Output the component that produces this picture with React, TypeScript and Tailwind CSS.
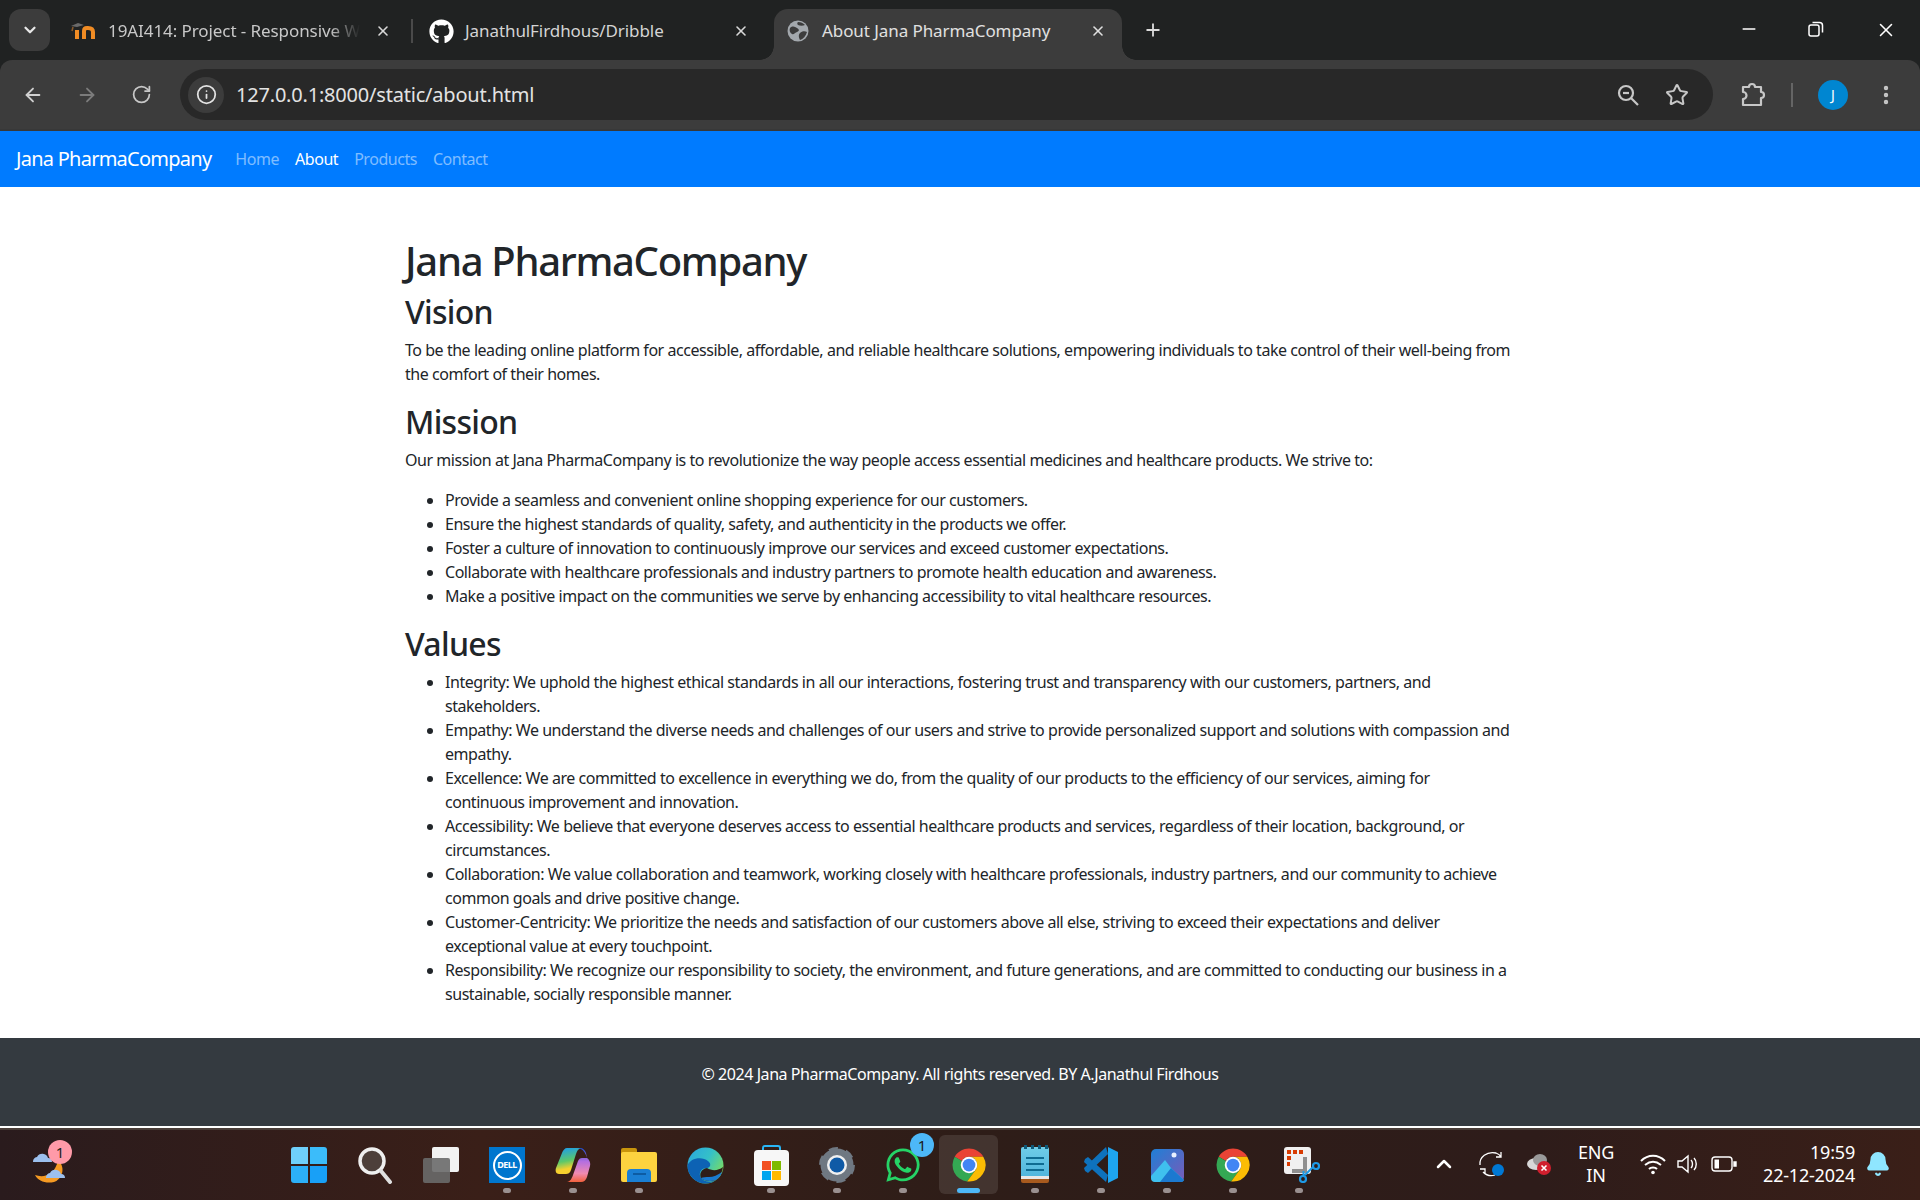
import { ArrowLeft, ArrowRight, ChevronDown, ChevronUp, Info, MoreVertical, Plus, RotateCw, Star, X, Minus, Bell } from "lucide-react";
import { FaGithub, FaWhatsapp } from "react-icons/fa";

const segoe = "font-['Noto_Sans',sans-serif]";

function Globe() {
  return (
    <svg width="22" height="22" viewBox="0 0 22 22">
      <circle cx="11" cy="11" r="10.5" fill="#a3a8ad" />
      <path d="M3 8c3-3 5-1 7 0s3 3 0 4-3 3-5 2-3-4-2-6zM13 13c2-2 5-2 7-1-1 4-4 7-7 8-1-2-2-5 0-7zM11 2c3 0 5 1 7 3-2 1-5 1-7 0-1-1-1-2 0-3z" fill="#3c3c3c" />
    </svg>
  );
}

function MoodleIcon() {
  return (
    <svg width="26" height="16" viewBox="0 0 26 16" fill="none">
      <path d="M0 3l7-3 6 2-7 2z" fill="#6a6a6a" />
      <path d="M2 4l-1 4" stroke="#8a5a2a" strokeWidth="1.500" />
      <path d="M6 16V7" stroke="#f08c24" strokeWidth="4" />
      <path d="M13 16V8c0-2 1-3 3-3h1c3 0 5 1 5 4v7" stroke="#f08c24" strokeWidth="4" />
    </svg>
  );
}

function ChromeLogo({ size = 36 }: { size?: number }) {
  return (
    <svg width={size} height={size} viewBox="0 0 48 48">
      <path d="M5 13A22 22 0 0 1 43.050 13H24A11 11 0 0 0 14.500 18.500z" fill="#ea4335" />
      <path d="M5 13A22 22 0 0 0 21.500 45.900L33.500 29.500A11 11 0 0 1 14.500 18.500z" fill="#34a853" />
      <path d="M43.050 13A22 22 0 0 1 21.500 45.900L33.500 29.500A11 11 0 0 0 24 13z" fill="#fbbc04" />
      <circle cx="24" cy="24" r="11" fill="#fff" />
      <circle cx="24" cy="24" r="8.500" fill="#4285f4" />
    </svg>
  );
}

function Tab({ children, close, width }: { children: React.ReactNode; close: number; width: string }) {
  return (
    <div className={`flex items-center relative h-full ${width}`}>
      {children}
      <X size={16} strokeWidth={2.4} className="absolute text-[#d8d8d8]" style={{ left: close }} />
    </div>
  );
}

function ChromeBar() {
  return (
    <div className="bg-[#202222]">
      <div className="flex h-[60px] pl-[9px] text-[#d4d4d4] text-[17px] tracking-[-0.08px]">
        <div className="w-[41px] h-[42px] mt-[9px] rounded-[12px] bg-[#3c3c3c] flex items-center justify-center">
          <ChevronDown size={18} strokeWidth={3} className="text-[#e8e8e8]" />
        </div>
        <Tab width="w-[363px] pl-[21px] pt-[2px]" close={325}>
          <MoodleIcon />
          <span className="ml-[11px] inline-block whitespace-nowrap text-[#c8c8c8] [mask-image:linear-gradient(90deg,#000_88%,transparent)]">19AI414: Project - Responsive W</span>
          <span className="absolute right-0 top-[19px] h-[24px] w-[2px] bg-[#4a4a4a]" />
        </Tab>
        <Tab width="w-[361px] pl-[16px] pt-[2px]" close={320}>
          <FaGithub size={25} className="text-white" />
          <span className="ml-[11px] whitespace-nowrap">JanathulFirdhous/Dribble</span>
        </Tab>
        <div className="relative w-[348px] mt-[9px] h-[51px] bg-[#3c3c3c] rounded-t-[14px] flex items-center pl-[13px] pb-[7px]">
          <span className="absolute left-[-14px] bottom-0 w-[14px] h-[14px] bg-[radial-gradient(circle_at_0_0,#202222_13.5px,#3c3c3c_14px)]" />
          <span className="absolute right-[-14px] bottom-0 w-[14px] h-[14px] bg-[radial-gradient(circle_at_100%_0,#202222_13.5px,#3c3c3c_14px)]" />
          <Globe />
          <span className="ml-[13px] whitespace-nowrap text-[#e0e0e0]">About Jana PharmaCompany</span>
          <X size={16} strokeWidth={2.4} className="absolute left-[316px] top-[14px] text-[#e0e0e0]" />
        </div>
        <div className="ml-[21px] flex items-center h-[60px]">
          <Plus size={20} strokeWidth={2.2} className="text-[#dcdcdc]" />
        </div>
        <div className="ml-auto flex items-start pt-[19px] text-white">
          <Minus size={20} strokeWidth={1.8} className="mr-[49px]" />
          <svg width="16" height="16" viewBox="0 0 16 16" fill="none" stroke="#fff" strokeWidth="1.5" className="mt-[2px] mr-[51px]">
            <rect x="1" y="4" width="10" height="11" rx="2" />
            <path d="M4.500 1.500h7a3 3 0 0 1 3 3v7" />
          </svg>
          <X size={22} strokeWidth={1.7} className="mr-[23px]" />
        </div>
      </div>
      <div className="h-[71px] bg-[#3c3c3c] rounded-t-[12px] border-b-2 border-[#383838] flex items-center text-[#c7c7c7]">
        <div className="flex items-center pl-[22px] w-[180px]">
          <ArrowLeft size={22} strokeWidth={2} className="text-[#d0d0d0]" />
          <ArrowRight size={22} strokeWidth={2} className="ml-[32px] text-[#7c7c7c]" />
          <RotateCw size={21} strokeWidth={2} className="ml-[33px]" />
        </div>
        <div className="w-[1533px] h-[51px] rounded-full bg-[#282828] flex items-center pl-[8px] pr-[24px]">
          <div className="w-[36px] h-[36px] rounded-full bg-[#3c3c3c] flex items-center justify-center">
            <Info size={21} strokeWidth={2} className="text-[#e3e3e3]" />
          </div>
          <span className="ml-[12px] text-[20px] tracking-[-0.2px] text-[#e3e3e3]">127.0.0.1:8000/static/about.html</span>
          <svg width="22" height="22" viewBox="0 0 22 22" fill="none" stroke="#c7c7c7" strokeWidth="2.200" className="ml-auto">
            <circle cx="9" cy="9" r="7" />
            <path d="M14 14l7 7" />
            <path d="M6 9h6" />
          </svg>
          <Star size={24} strokeWidth={2} className="ml-[26px]" />
        </div>
        <svg width="26" height="26" viewBox="0 0 26 26" fill="none" stroke="#c7c7c7" strokeWidth="2.2" className="ml-[27px]">
          <path d="M3 5h6a3 3 0 0 1 6 0h6v5a3 3 0 0 1 0 6v7H3v-6a3 3 0 0 0 0-7z" strokeLinejoin="round" />
        </svg>
        <span className="ml-[25px] w-[2px] h-[24px] bg-[#656565]" />
        <div className="ml-[25px] w-[30px] h-[30px] rounded-full bg-[#0086d1] flex items-center justify-center text-[14px] text-white">J</div>
        <MoreVertical size={24} strokeWidth={2.4} className="ml-[26px]" />
      </div>
    </div>
  );
}

function NavBar() {
  return (
    <nav className="bg-[#007bff] h-[56px] flex items-center px-4 tracking-[-0.46px]">
      <span className="text-[20px] text-white mr-4 tracking-[-0.75px]">Jana PharmaCompany</span>
      <a className="px-2 text-white/50">Home</a>
      <a className="px-2 text-white">About</a>
      <a className="px-2 text-white/50">Products</a>
      <a className="px-2 text-white/50">Contact</a>
    </nav>
  );
}

const missionItems = [
  "Provide a seamless and convenient online shopping experience for our customers.",
  "Ensure the highest standards of quality, safety, and authenticity in the products we offer.",
  "Foster a culture of innovation to continuously improve our services and exceed customer expectations.",
  "Collaborate with healthcare professionals and industry partners to promote health education and awareness.",
  "Make a positive impact on the communities we serve by enhancing accessibility to vital healthcare resources.",
];

const valueItems = [
  "Integrity: We uphold the highest ethical standards in all our interactions, fostering trust and transparency with our customers, partners, and stakeholders.",
  "Empathy: We understand the diverse needs and challenges of our users and strive to provide personalized support and solutions with compassion and empathy.",
  "Excellence: We are committed to excellence in everything we do, from the quality of our products to the efficiency of our services, aiming for continuous\u00A0improvement and innovation.",
  "Accessibility: We believe that everyone deserves access to essential healthcare products and services, regardless of their location, background, or circumstances.",
  "Collaboration: We value collaboration and teamwork, working closely with healthcare professionals, industry partners, and our community to achieve common goals and drive positive change.",
  "Customer-Centricity: We prioritize the needs and satisfaction of our customers above all else, striving to exceed their expectations and deliver exceptional value at every touchpoint.",
  "Responsibility: We recognize our responsibility to society, the environment, and future generations, and are committed to conducting our business in a sustainable, socially responsible manner.",
];

function Content() {
  return (
    <main className="flex-1 w-[1140px] mx-auto px-[15px] pt-[50px] text-[#212529] tracking-[-0.46px]">
      <h1 className="text-[40px] leading-[48px] font-medium mb-2 tracking-[-1.3px]">Jana PharmaCompany</h1>
      <h2 className="text-[32px] leading-[38px] font-medium mb-[7px] tracking-[-0.7px]">Vision</h2>
      <p className="mb-[17px] leading-6">
        To be the leading online platform for accessible, affordable, and reliable healthcare solutions, empowering individuals to take control of their well-being from the comfort of their homes.
      </p>
      <h2 className="text-[32px] leading-[38px] font-medium mb-[7px] tracking-[-0.7px]">Mission</h2>
      <p className="mb-4 leading-6">
        Our mission at Jana PharmaCompany is to revolutionize the way people access essential medicines and healthcare products. We strive to:
      </p>
      <ul className="list-disc pl-10 mb-[17px] leading-6">
        {missionItems.map((t) => <li key={t}>{t}</li>)}
      </ul>
      <h2 className="text-[32px] leading-[38px] font-medium mb-[7px] tracking-[-0.7px]">Values</h2>
      <ul className="list-disc pl-10 mb-4 leading-6">
        {valueItems.map((t) => <li key={t}>{t}</li>)}
      </ul>
    </main>
  );
}

function Footer() {
  return (
    <footer className="bg-[#343a40] h-[88px] pt-6 text-center text-white leading-6 tracking-[-0.44px]">
      © 2024 Jana PharmaCompany. All rights reserved. BY A.Janathul Firdhous
    </footer>
  );
}

function Cell({ children, dot = true }: { children: React.ReactNode; dot?: boolean }) {
  return (
    <div className="relative w-[66px] h-[72px] flex items-center justify-center">
      {children}
      {dot && <span className="absolute bottom-[8px] w-[8px] h-[5px] rounded-full bg-[#9a9090]" />}
    </div>
  );
}

function Taskbar() {
  return (
    <div className="h-[72px] border-t-2 border-t-[#4a3d38] bg-[linear-gradient(90deg,#2a1b1d,#3a1f18_25%,#2e1d18_50%,#2e1c1a_80%,#3a1f18)] relative flex items-center text-white">
      {/* weather */}
      <div className="absolute left-[28px] top-[10px] w-[44px] h-[46px]">
        <svg width="44" height="46" viewBox="0 0 44 46">
          <path d="M30 20a13 13 0 0 1-4 22c-8 2-16-1-19-7 8 3 20 1 23-15z" fill="#f59a23" />
          <path d="M5 22a5 5 0 0 1 4-5 6 6 0 0 1 11 1c3 0 4 2 4 4z" fill="#9cc0ee" />
          <path d="M18 38a5 5 0 0 1 4-5 6 6 0 0 1 11 1c3 0 4 2 4 4z" fill="#9cc0ee" />
        </svg>
        <span className="absolute right-0 top-0 w-[24px] h-[24px] rounded-full bg-[#ff9aa8] text-[#222] text-[15px] leading-[24px] text-center">1</span>
      </div>

      <div className="ml-[276px] flex">
        <Cell dot={false}>
          <div className="grid grid-cols-2 gap-[2px] w-[36px] h-[36px]">
            <span className="bg-[#6fd0fb] rounded-tl-[3px]" />
            <span className="bg-[#3bbcfa] rounded-tr-[3px]" />
            <span className="bg-[#2cb0f8] rounded-bl-[3px]" />
            <span className="bg-[#18a0f7] rounded-br-[3px]" />
          </div>
        </Cell>
        <Cell dot={false}>
          <svg width="36" height="38" viewBox="0 0 36 38">
            <circle cx="15" cy="15" r="12" fill="#4d3f3a" stroke="#efefef" strokeWidth="3.500" />
            <path d="M24 25l9 11" stroke="#e0e0e0" strokeWidth="4" strokeLinecap="round" />
          </svg>
        </Cell>
        <Cell dot={false}>
          <div className="relative w-[36px] h-[36px]">
            <span className="absolute right-0 top-0 w-[27px] h-[25px] rounded-[2px] bg-[#f2f2f2]" />
            <span className="absolute left-0 bottom-0 w-[27px] h-[25px] rounded-[2px] bg-[#6a6a6a]/90" />
          </div>
        </Cell>
        <Cell>
          <div className="w-[36px] h-[36px] bg-[#0076ce] flex items-center justify-center">
            <div className="w-[29px] h-[29px] rounded-full border-2 border-white flex items-center justify-center text-[9px] font-bold text-white tracking-[-0.5px]">DELL</div>
          </div>
        </Cell>
        <Cell>
          <svg width="36" height="36" viewBox="0 0 36 36">
            <defs>
              <linearGradient id="cpA" x1="0.3" y1="0" x2="0.5" y2="1">
                <stop offset="0" stopColor="#1f9fe8" />
                <stop offset="0.5" stopColor="#5cc86a" />
                <stop offset="0.8" stopColor="#f7d02e" />
              </linearGradient>
              <linearGradient id="cpB" x1="0.5" y1="0" x2="0.5" y2="1">
                <stop offset="0" stopColor="#1d4fd0" />
                <stop offset="0.4" stopColor="#b56fe0" />
                <stop offset="0.75" stopColor="#f08ab0" />
                <stop offset="1" stopColor="#f2603c" />
              </linearGradient>
            </defs>
            <path d="M12 1h14c-3 1-4 3-5 6l-5 16c-1 3-3 4-5 4H4c-3 0-4-3-3-6L7 6c1-3 3-5 5-5z" fill="url(#cpA)" />
            <path d="M22 1h3c3 0 5 2 6 5l1 5h-5c-2 0-3 1-4 3l-5 14c-1 3-3 7-6 7h14c3 0 5-2 6-5l3-11c1-3-1-7-3-8-1-4-4-10-10-10z" fill="url(#cpB)" />
          </svg>
        </Cell>
        <Cell>
          <div className="relative w-[36px] h-[34px]">
            <span className="absolute left-0 top-0 w-[16px] h-[8px] rounded-t-[2px] bg-[#c9950c]" />
            <span className="absolute left-0 top-[4px] w-[36px] h-[30px] rounded-[2px] bg-[#fdd33f]" />
            <span className="absolute left-[6px] bottom-0 w-[24px] h-[13px] rounded-t-[4px] bg-[#1a7fd4]">
              <span className="block mx-auto mt-[4px] w-[13px] h-[2px] bg-[#0d5ca3]" />
            </span>
          </div>
        </Cell>
        <Cell dot={false}>
          <svg width="37" height="37" viewBox="0 0 37 37">
            <defs>
              <linearGradient id="edge" x1="0" y1="0" x2="1" y2="0.6">
                <stop offset="0" stopColor="#2aa5e0" />
                <stop offset="0.55" stopColor="#34c0c8" />
                <stop offset="1" stopColor="#78dc64" />
              </linearGradient>
            </defs>
            <circle cx="18.500" cy="18.500" r="18" fill="url(#edge)" />
            <path d="M.5 18.500C3 11 15 9 21 14c4 3 2 7-1 7-6 0-9 5-6 10 2 3 8 5 15 2-3 2.500-7 3.500-10.500 3.500C8.500 36.500.5 28.500.5 18.500z" fill="#0d62b4" />
            <path d="M20 21c5 3 11 3 16-1-.5 5-3 9-7 13-6 2-12 1-15-2-2-4 0-9 6-10z" fill="#2e1d18" />
            <path d="M14 31c3 3 9 4 15 2 3-2 5-5 6-8-4 3-9 5-13 5-3 0-6 0-8 1z" fill="#1a7ad0" />
          </svg>
        </Cell>
        <Cell>
          <div className="relative w-[35px] h-[41px] mt-[1px]">
            <span className="absolute left-[8px] top-0 w-[19px] h-[10px] rounded-t-[3px] border-2 border-b-0 border-[#29b6f6]" />
            <div className="absolute left-0 top-[5px] w-[35px] h-[36px] rounded-[4px] bg-[#f7f7f7] pt-[11px] flex justify-center">
              <div className="grid grid-cols-2 gap-[1px] w-[19px] h-[19px]">
                <span className="bg-[#f25022]" />
                <span className="bg-[#7fba00]" />
                <span className="bg-[#00a4ef]" />
                <span className="bg-[#ffb900]" />
              </div>
            </div>
          </div>
        </Cell>
        <Cell>
          <svg width="36" height="36" viewBox="0 0 36 36">
            <circle cx="18" cy="18" r="12.500" fill="none" stroke="#6f7882" strokeWidth="8" />
            <circle cx="18" cy="18" r="15.500" fill="none" stroke="#6f7882" strokeWidth="5" strokeDasharray="8.500 7.730" />
            <circle cx="18" cy="18" r="10" fill="#f0f0f0" />
            <circle cx="18" cy="18" r="7.500" fill="#0f5aa6" />
          </svg>
        </Cell>
        <Cell>
          <div className="relative">
            <FaWhatsapp size={38} className="text-[#25d366]" />
            <span className="absolute right-[-12px] top-[-13px] w-[24px] h-[24px] rounded-full bg-[#4db8f8] text-[#1a1a1a] text-[15px] leading-[24px] text-center">1</span>
          </div>
        </Cell>
        <div className="relative w-[66px] h-[72px] flex items-center justify-center">
          <div className="absolute left-[3px] top-[6px] w-[59px] h-[59px] rounded-[6px] bg-white/10" />
          <div className="relative"><ChromeLogo /></div>
          <span className="absolute bottom-[8px] left-[21px] w-[23px] h-[5px] rounded-full bg-[#4db8f8]" />
        </div>
        <Cell>
          <div className="relative w-[28px] h-[36px] rounded-[2px] bg-[linear-gradient(180deg,#6fcde8,#4fb4dc)] flex flex-col items-center pt-[10px] gap-[4px] border-b-[4px] border-[#a85a1e]">
            <span className="absolute top-[-2px] left-[3px] flex gap-[4px]">
              <i className="w-[3px] h-[4px] bg-[#0f5a7a]" />
              <i className="w-[3px] h-[4px] bg-[#0f5a7a]" />
              <i className="w-[3px] h-[4px] bg-[#0f5a7a]" />
              <i className="w-[3px] h-[4px] bg-[#0f5a7a]" />
            </span>
            <span className="w-[18px] h-[2px] bg-[#0f6c92]" />
            <span className="w-[18px] h-[2px] bg-[#0f6c92]" />
            <span className="w-[18px] h-[2px] bg-[#0f6c92]" />
            <span className="absolute left-0 bottom-0 w-full h-[3px] bg-[#e8e8e8]" />
          </div>
        </Cell>
        <Cell>
          <svg width="36" height="36" viewBox="0 0 36 36">
            <path d="M2 12l3-2 20 18-2 7L1 15z" fill="#0e72bd" />
            <path d="M1 21l22-21 2 7L5 26l-3-2z" fill="#0e72bd" />
            <path d="M25 0l10 5v26l-10 5z" fill="#1ea5f0" />
          </svg>
        </Cell>
        <Cell>
          <svg width="33" height="33" viewBox="0 0 33 33">
            <defs>
              <linearGradient id="ph" x1="0" y1="0" x2="1" y2="1">
                <stop offset="0" stopColor="#1f7fd6" />
                <stop offset="1" stopColor="#7a5bb8" />
              </linearGradient>
            </defs>
            <rect width="33" height="33" rx="5" fill="url(#ph)" />
            <circle cx="23" cy="6" r="2.500" fill="#e8f0ff" />
            <path d="M0 27l14-16 6 8 13 12a4 4 0 0 1-4 2H4a4 4 0 0 1-4-4z" fill="#3fc0ee" />
            <path d="M9 33l11-14 13 12a3 3 0 0 1-3 2z" fill="#1c79d0" />
          </svg>
        </Cell>
        <Cell>
          <ChromeLogo />
        </Cell>
        <Cell>
          <svg width="36" height="36" viewBox="0 0 36 36" className="ml-[6px]">
            <rect width="27" height="27" rx="3" fill="#f0f0f0" />
            <path d="M3 3h4v4H3zM9 3h4v4H9zM15 3h4v4h-4zM3 9h4v4H3zM3 15h3v4H3z" fill="#d83b01" />
            <path d="M21 10v14H8" fill="none" stroke="#8f8f8f" strokeWidth="4" />
            <circle cx="32" cy="19" r="3" fill="none" stroke="#1e9ae6" strokeWidth="2.200" />
            <circle cx="19" cy="32" r="3" fill="none" stroke="#1e9ae6" strokeWidth="2.200" />
            <path d="M21 28l8-8M19.500 29v-5" stroke="#1e9ae6" strokeWidth="2" />
          </svg>
        </Cell>
      </div>

      {/* tray */}
      <div className="ml-auto flex items-center text-[18px] tracking-[-0.2px] pb-[2px]">
        <ChevronUp size={24} strokeWidth={2.5} />
        <svg width="28" height="28" viewBox="0 0 28 28" fill="none" stroke="#fff" strokeWidth="1.3" className="ml-[22px]">
          <path d="M2 15C1 7 9 1 18 3c3 1 4 2 5 4M23 2v5h-5M5 22c4 4 9 4 12 3M2 19h5v5" />
          <circle cx="20" cy="20" r="6" fill="#0078d4" stroke="none" />
        </svg>
        <svg width="26" height="22" viewBox="0 0 26 22" className="ml-[20px]">
          <ellipse cx="10" cy="11" rx="9" ry="6" fill="#d8d8d8" />
          <ellipse cx="14" cy="7" rx="7" ry="6" fill="#9a9a9a" />
          <circle cx="18" cy="15" r="7" fill="#d11f2e" />
          <path d="M15.500 12.500l5 5m0-5l-5 5" stroke="#fff" strokeWidth="1.600" />
        </svg>
        <div className="ml-[24px] w-[40px] text-center leading-[23px]">ENG<br />IN</div>
        <svg width="26" height="22" viewBox="0 0 26 22" fill="none" stroke="#fff" strokeWidth="2" className="ml-[24px]">
          <path d="M1 8c7-7 17-7 24 0M5 12c5-4 11-4 16 0M9 16c2-2 6-2 8 0" />
          <circle cx="13" cy="19.500" r="1.800" fill="#fff" stroke="none" />
        </svg>
        <svg width="24" height="22" viewBox="0 0 24 22" fill="none" stroke="#fff" strokeWidth="1.400" className="ml-[11px]">
          <path d="M1 8h4l6-5v16l-6-5H1zM14 7c2 2 2 6 0 8M17 5c3 3 3 9 0 12" />
        </svg>
        <svg width="26" height="16" viewBox="0 0 26 16" fill="none" stroke="#fff" strokeWidth="1.400" className="ml-[10px]">
          <rect x="1" y="1" width="20" height="14" rx="3" />
          <rect x="3.500" y="3.500" width="4.500" height="9" fill="#fff" stroke="none" />
          <path d="M23 6h2v4h-2z" fill="#fff" />
        </svg>
        <div className="ml-[22px] w-[96px] text-right leading-[23px]">19:59<br />22-12-2024</div>
        <Bell size={26} fill="#8fe6ff" stroke="#8fe6ff" className="ml-[10px] mr-[29px]" />
      </div>
    </div>
  );
}

export default function App() {
  return (
    <div className={`min-h-[1200px] h-[1200px] flex flex-col overflow-hidden bg-white ${segoe}`}>
      <ChromeBar />
      <NavBar />
      <Content />
      <Footer />
      <div className="h-[2px] bg-white" />
      <Taskbar />
    </div>
  );
}
